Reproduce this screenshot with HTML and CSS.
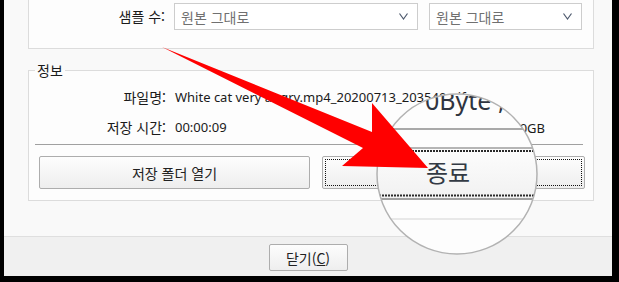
FILE: index.html
```html
<!DOCTYPE html>
<html lang="ko">
<head>
  <meta charset="UTF-8">
  <meta name="viewport" content="width=device-width, initial-scale=1.0">
  <title>저장 완료</title>
  <link rel="stylesheet" href="styles.css">
</head>
<body>

  <div class="screen">
    <div class="window">
      <div class="main">

        <div class="group group-top">
          <span class="label">샘플 수:</span>
          <div class="select select-wide">
            <span>원본 그대로</span>
            <svg class="chevron" width="9" height="7" viewBox="0 0 9 7"><polyline points="0.5,0.5 4.5,6 8.5,0.5"/></svg>
          </div>
          <div class="select select-narrow">
            <span>원본 그대로</span>
            <svg class="chevron" width="9" height="7" viewBox="0 0 9 7"><polyline points="0.5,0.5 4.5,6 8.5,0.5"/></svg>
          </div>
        </div>

        <fieldset class="group info">
          <legend>정보</legend>
          <div class="row">
            <span class="label">파일명:</span>
            <span class="value">White cat very angry.mp4_20200713_203540.gif</span>
          </div>
          <div class="row">
            <span class="label">저장 시간:</span>
            <span class="value">00:00:09</span>
            <span class="extra">남은 공간: 120GB</span>
          </div>
          <hr class="sep">
          <div class="actions">
            <button class="btn btn-open">저장 폴더 열기</button>
            <button class="btn btn-quit">종료</button>
          </div>
        </fieldset>

      </div>
      <div class="footer">
        <button class="btn btn-close">닫기(<u>C</u>)</button>
      </div>
    </div>
  </div>

  <!-- magnifier + red arrow drawn over the dialog -->
  <svg class="overlay" width="619" height="282" viewBox="0 0 619 282">
    <defs>
      <clipPath id="lens">
        <circle cx="457" cy="174" r="80"/>
      </clipPath>
      <linearGradient id="btnFill" x1="0" y1="0" x2="0" y2="1">
        <stop offset="0" stop-color="#fdfdfd"/>
        <stop offset="1" stop-color="#f1f1f1"/>
      </linearGradient>
    </defs>
    <g clip-path="url(#lens)">
      <rect x="370" y="90" width="180" height="170" fill="#fdfdfd"/>
      <text class="lens-text" x="425" y="110" font-size="25">0Byte ,</text>
      <line x1="370" y1="129" x2="550" y2="129" stroke="#a9a9a9" stroke-width="2"/>
      <rect x="370" y="148" width="180" height="51" fill="url(#btnFill)"/>
      <line x1="370" y1="148" x2="550" y2="148" stroke="#9c9c9c" stroke-width="1.5"/>
      <line x1="370" y1="151" x2="550" y2="151" stroke="#2a2a2a" stroke-width="2" stroke-dasharray="2 1"/>
      <text class="lens-kr" x="426" y="182" font-size="24">종료</text>
      <line x1="370" y1="195.5" x2="550" y2="195.5" stroke="#2a2a2a" stroke-width="2" stroke-dasharray="2 1"/>
      <line x1="370" y1="199" x2="550" y2="199" stroke="#a0a0a0" stroke-width="2"/>
      <line x1="370" y1="219" x2="550" y2="219" stroke="#e8e8e8" stroke-width="2"/>
    </g>
    <circle cx="457" cy="174" r="80" fill="none" stroke="#b2b2b2" stroke-width="1.5"/>
    <polygon points="162,47 372,132 372,103 428,168 342,166 363,148" fill="#ff0000"/>
  </svg>

</body>
</html>
```

FILE: styles.css
```css
body {
  margin: 0;
  background-color: #000;
  font-family: "Noto Sans CJK KR", sans-serif;
  font-size: 14px;
  color: #1a1a1a;
  position: relative;
  width: 619px;
  height: 282px;
  overflow: hidden;
}

.screen {
  display: flex;
  height: 282px;
  padding: 0 7px 6px 4px;
  box-sizing: border-box;
}

.window {
  flex: 1;
  display: flex;
  flex-direction: column;
  background-color: #f9f9f9;
}

.main {
  flex: 1;
  padding: 0 18px 0 24px;
}

.group {
  border: 1px solid #dcdcdc;
  background-color: #fdfdfd;
}

/* top box is cut off by the screenshot */
.group-top {
  height: 49px;
  box-sizing: border-box;
  border-top: none;
  display: flex;
  align-items: flex-start;
  padding-top: 3px;
}

.group-top .label {
  width: 136px;
  text-align: right;
  line-height: 27px;
  margin-right: 9px;
}

.select {
  height: 27px;
  box-sizing: border-box;
  border: 1px solid #cdcdcd;
  background-color: #fff;
  display: flex;
  align-items: center;
  justify-content: space-between;
  padding: 0 9px 0 6px;
  color: #707070;
}

.select-wide {
  width: 244px;
  margin-right: 11px;
}

.select-narrow {
  width: 153px;
}

.chevron {
  fill: none;
  stroke: #4e5a6e;
  stroke-width: 1.2;
}

.info {
  margin: 11px 0 0 0;
  padding: 2px 8px 11px 10px;
  min-width: 0;
}

.info legend {
  margin-left: -4px;
  padding: 0 2px;
  line-height: 20px;
}

.row {
  display: flex;
  height: 30px;
  align-items: center;
}

.row .label {
  width: 127px;
  text-align: right;
  margin-right: 9px;
  flex-shrink: 0;
}

.row .value {
  font-family: "Noto Sans", "Noto Sans CJK KR", sans-serif;
  font-size: 13px;
  white-space: nowrap;
}

.row .extra {
  margin-left: auto;
  margin-right: 40px;
  font-family: "Noto Sans", "Noto Sans CJK KR", sans-serif;
  font-size: 13px;
}

.sep {
  border: none;
  border-top: 1px solid #a0a0a0;
  margin: 2px 2px 11px -4px;
}

.actions {
  display: flex;
  gap: 12px;
}

.btn {
  font-family: "Noto Sans CJK KR", sans-serif;
  font-size: 14px;
  color: #222;
  height: 33px;
  border: 1px solid #adadad;
  border-radius: 2px;
  background: linear-gradient(#fdfdfd, #eeeeee);
  padding: 0;
}

.btn-open {
  width: 271px;
}

.btn-quit {
  flex: 1;
  outline: 1px dotted #111;
  outline-offset: -4px;
}

.footer {
  height: 40px;
  box-sizing: border-box;
  border-top: 1px solid #dfdfdf;
  background-color: #f0f0f0;
  display: flex;
  justify-content: center;
  padding-top: 7px;
}

.btn-close {
  width: 79px;
  height: 27px;
}

.overlay {
  position: absolute;
  top: 0;
  left: 0;
  pointer-events: none;
}

.lens-text {
  font-family: "Noto Sans", sans-serif;
  fill: #2e3440;
}

.lens-kr {
  font-family: "Noto Sans CJK KR", sans-serif;
  fill: #333a44;
}
```
